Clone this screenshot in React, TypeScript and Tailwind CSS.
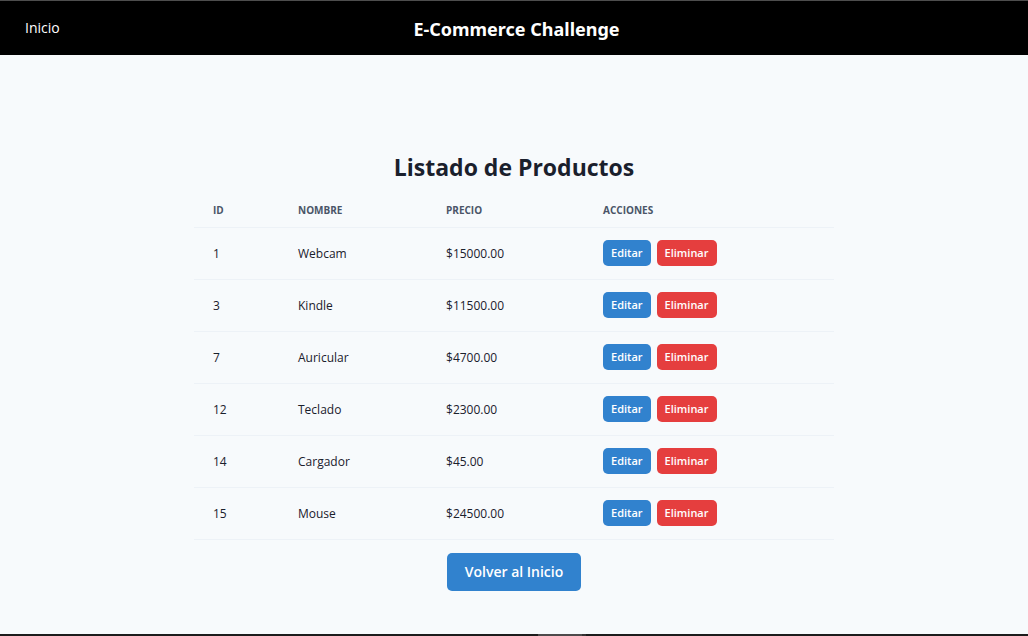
const products = [
  { id: 1, name: "Webcam", price: "15000.00" },
  { id: 3, name: "Kindle", price: "11500.00" },
  { id: 7, name: "Auricular", price: "4700.00" },
  { id: 12, name: "Teclado", price: "2300.00" },
  { id: 14, name: "Cargador", price: "45.00" },
  { id: 15, name: "Mouse", price: "24500.00" },
];

export default function App() {
  return (
    <div className="flex min-h-screen flex-col bg-[#f7fafc] font-['Open_Sans','Noto_Sans',sans-serif] text-[#1a202c]">
      <header className="grid grid-cols-3 items-center border-t border-[#4d4d4d] bg-black py-3 pr-5 pl-[25px] text-white">
        <a href="#" className="text-sm">Inicio</a>
        <h1 className="flex justify-center pt-0.5 font-['Noto_Sans',sans-serif] text-lg leading-7 font-bold whitespace-nowrap">E-Commerce Challenge</h1>
      </header>
      <main className="mx-auto flex w-full max-w-[640px] grow flex-col items-center pt-24 pb-10">
        <h2 className="text-[23px] leading-8 font-bold">Listado de Productos</h2>
        <table className="mt-3 w-full table-fixed border-collapse text-left">
          <thead>
            <tr className="h-8 border-b border-[#edf2f7] text-[10px] text-[#4a5568]">
              <th className="w-[85px] pl-[19px]">ID</th>
              <th className="w-[148px] pl-[19px]">NOMBRE</th>
              <th className="w-[157px] pl-[19px]">PRECIO</th>
              <th className="pl-[19px]">ACCIONES</th>
            </tr>
          </thead>
          <tbody>
            {products.map((p) => (
              <tr key={p.id} className="h-[52px] border-b border-[#edf2f7] text-xs">
                <td className="pt-0.5 pl-[19px]">{p.id}</td>
                <td className="pt-0.5 pl-[19px]">{p.name}</td>
                <td className="pt-0.5 pl-[19px]">${p.price}</td>
                <td className="pl-[19px]">
                  <div className="flex gap-1.5">
                    <button className="h-[26px] rounded-[5px] bg-[#3182ce] px-2 text-[11px] font-semibold text-white">Editar</button>
                    <button className="h-[26px] rounded-[5px] bg-[#e53e3e] px-2 text-[11px] font-semibold text-white">Eliminar</button>
                  </div>
                </td>
              </tr>
            ))}
          </tbody>
        </table>
        <a href="#" className="mt-[13px] flex h-[38px] items-center rounded-[5px] bg-[#3182ce] px-[18px] text-sm font-semibold text-white">Volver al Inicio</a>
      </main>
      <footer className="flex h-0.5 justify-center bg-[#1c1c1c] pl-24">
        <div className="w-11 bg-[#4d4a4b]" />
        <div className="w-1 bg-[#343132]" />
      </footer>
    </div>
  );
}
